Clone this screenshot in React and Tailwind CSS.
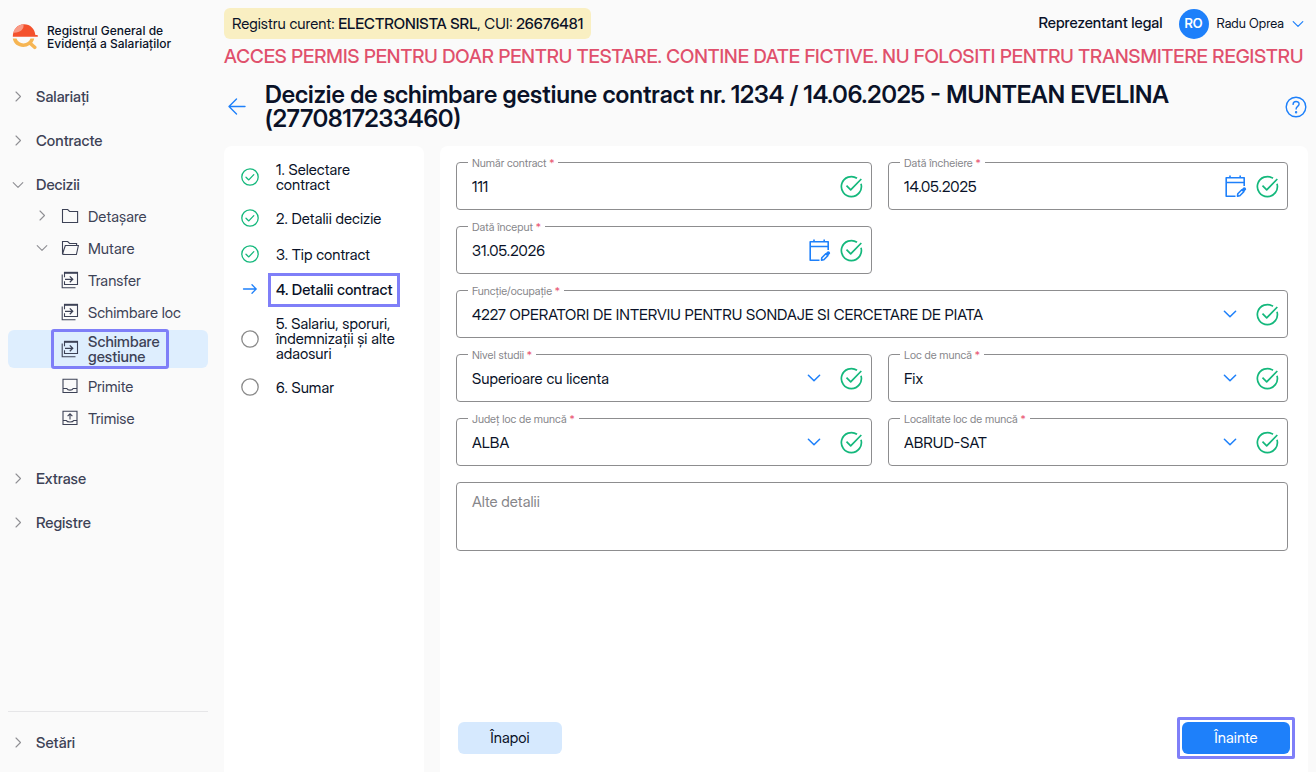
import React, { useState } from "react";

const stroke = { fill: "none", stroke: "currentColor", strokeLinecap: "round", strokeLinejoin: "round" };

function ChevronRight() {
  return (
    <svg viewBox="0 0 12 12" className="w-3 h-3 text-[#8f8f94]" {...stroke} strokeWidth="1.1">
      <path d="M4 1 8.500 5.500 4 10" />
    </svg>
  );
}

function ChevronDown({ className = "w-3 h-3 text-[#8f8f94]", width = "1.1" }) {
  return (
    <svg viewBox="0 0 12 12" className={className} {...stroke} strokeWidth={width}>
      <path d="M1.2 3.6 6 8.4l4.800-4.800" />
    </svg>
  );
}

function Logo() {
  return (
    <svg viewBox="0 0 26 26" className="w-[26px] h-[26px] shrink-0">
      <path d="M.8 12.800C.8 5.700 5.500.2 12 .2s10.800 4.800 11.400 10.900h1.800c.5 0 .6.400.6.800v.9z" fill="#f4512c" />
      <path d="M1.300 8.800C2.700 4.200 6 .9 11.300.3c1.600 4.600-3.700 9-10 8.500z" fill="#f99a86" />
      <path d="M.8 14.600h3.700c1 3 3.700 4.800 7 4.800 3.400 0 6-2 7-4.800h3.700c-.4 1.700-1 3-2 4.200l3.900 3.400c1.600 1.500-.8 4-2.400 2.600l-4.200-3.700c-1.800 1.300-3.900 1.900-6.200 1.900C6 23 1.600 19.800.8 14.600z" fill="#f6b553" />
    </svg>
  );
}

const navIcons = {
  folder: (
    <path d="M1.500 15.500v-13h5.200l1.900 2h8v11z" />
  ),
  folderOpen: (
    <path d="M3.900 15.500 1.500 15V2.500h5.200l1.900 2h7v2M1.500 15l2.800-8.500h13.100l-2 9H1.800" />
  ),
  transfer: (
    <>
      <path d="M3.500 6.300V1.500h13v12h-13v-3.200M1.200 3.500v13.200h13.300" />
      <path d="M3 1.800h14" strokeWidth="2" />
      <path d="M4 8.300h7.500M8.800 5.400l2.900 2.900-2.900 2.900" strokeWidth="1.300" />
    </>
  ),
  inbox: (
    <path d="M2 2.200h14v13.300H2zM2 11.500h3.800c1 2.200 5.400 2.200 6.400 0H16" />
  ),
  outbox: (
    <path d="M2 2.200h14v13.300H2zM2 11.500h3.300c.8 2 6.600 2 7.400 0H16M9 10.500V5M6.600 7.200 9 4.800l2.400 2.400" />
  ),
};

const subItems = [
  { label: "Detașare", icon: "folder", chevron: "right" },
  { label: "Mutare", icon: "folderOpen", chevron: "down" },
  { label: "Transfer", icon: "transfer" },
  { label: "Schimbare loc", icon: "transfer" },
  { label: "Schimbare gestiune", icon: "transfer", active: true },
  { label: "Primite", icon: "inbox" },
  { label: "Trimise", icon: "outbox" },
];

function NavItem({ label, open }) {
  return (
    <button className="w-full h-7 flex items-center pl-1 gap-3 text-[15px] font-medium text-[#3d4256] cursor-pointer">
      <span className="w-3 flex justify-center">{open ? <ChevronDown /> : <ChevronRight />}</span>
      <span>{label}</span>
    </button>
  );
}

function SubItem({ item }) {
  return (
    <a
      href="#"
      className={
        item.active
          ? "min-h-7 flex items-center rounded-md bg-[#deeefe] font-medium"
          : "min-h-7 flex items-center rounded-md"
      }
    >
      <span className="w-11 shrink-0 pl-7 flex">
        {item.chevron === "right" && <ChevronRight />}
        {item.chevron === "down" && <ChevronDown />}
      </span>
      <span
        className={
          item.active
            ? "flex items-center gap-2 px-2 py-1 rounded-xs outline-3 -outline-offset-2 outline-[#7f7ff8]"
            : "flex items-center gap-2 px-2"
        }
      >
        <span className="w-5 flex justify-center shrink-0">
          <svg viewBox="0 0 18 18" className="w-[18px] h-[18px]" {...stroke} strokeLinecap="butt" strokeLinejoin="miter" strokeWidth="1.1">
            {navIcons[item.icon]}
          </svg>
        </span>
        <span className={item.active ? "w-min leading-[15px]" : "leading-[15px]"}>{item.label}</span>
      </span>
    </a>
  );
}

function Sidebar() {
  return (
    <aside className="w-[216px] shrink-0 px-2 flex flex-col">
      <div className="flex items-center gap-[9px] pl-1 pt-6">
        <Logo />
        <p className="font-['Inter',sans-serif] text-[12px] leading-[13px] font-medium text-[#0a1228] whitespace-nowrap">
          Registrul General de
          <br />
          Evidență a Salariaților
        </p>
      </div>

      <nav className="mt-[33px] flex flex-col gap-4">
        <NavItem label="Salariați" />
        <NavItem label="Contracte" />
        <div className="pb-[17px]">
          <NavItem label="Decizii" open />
          <div className="mt-[3px] flex flex-col gap-1 text-[15px] text-[#3d4256]">
            {subItems.map((item) => (
              <SubItem key={item.label} item={item} />
            ))}
          </div>
        </div>
        <NavItem label="Extrase" />
        <NavItem label="Registre" />
      </nav>

      <div className="mt-auto border-t border-[#e6e6e8] pt-[17px] pb-[15px]">
        <NavItem label="Setări" />
      </div>
    </aside>
  );
}

const steps = [
  { label: "1. Selectare contract", state: "done" },
  { label: "2. Detalii decizie", state: "done" },
  { label: "3. Tip contract", state: "done" },
  { label: "4. Detalii contract", state: "current" },
  { label: "5. Salariu, sporuri, îndemnizații și alte adaosuri", state: "todo" },
  { label: "6. Sumar", state: "todo" },
];

function StepIcon({ state }) {
  if (state === "done") {
    return (
      <svg viewBox="0 0 20 20" className="w-5 h-5 shrink-0 text-[#14b87c]" {...stroke} strokeWidth="1.300">
        <circle cx="10" cy="10" r="8.200" />
        <path d="m6 10.300 2.800 2.600 5-5.300" />
      </svg>
    );
  }
  if (state === "current") {
    return (
      <svg viewBox="0 0 20 20" className="w-5 h-5 shrink-0 text-[#1e80fa]" {...stroke} strokeWidth="1.300">
        <path d="M3.500 9h12.500M12 4.800 16.200 9 12 13.200" />
      </svg>
    );
  }
  return (
    <svg viewBox="0 0 20 20" className="w-5 h-5 shrink-0 text-[#8a8a8a]" {...stroke} strokeWidth="1.300">
      <circle cx="10" cy="10" r="8.200" />
    </svg>
  );
}

function Steps() {
  return (
    <ol className="w-[200px] shrink-0 bg-white rounded-t-lg pl-4 pr-6 pt-4 flex flex-col gap-4 text-[15px] leading-[15px] text-[#0a1228]">
      {steps.map((step) => (
        <li key={step.label} className="flex items-center gap-4 min-h-5">
          <StepIcon state={step.state} />
          <span
            className={
              step.state === "current"
                ? "font-medium leading-[18px] whitespace-nowrap outline-3 outline-offset-5 outline-[#7f7ff8]"
                : ""
            }
          >
            {step.label}
          </span>
        </li>
      ))}
    </ol>
  );
}

function ValidIcon() {
  return (
    <svg viewBox="0 0 24 24" className="w-6 h-6 shrink-0 text-[#14b87c]" {...stroke} strokeLinecap="butt" strokeWidth="1.700">
      <path d="M22 9.800A10 10 0 1 1 18 4.300" />
      <path d="M7.500 11.700l4.200 4.200L22.300 5" />
    </svg>
  );
}

function CalendarIcon() {
  return (
    <svg viewBox="0 0 24 24" className="w-6 h-6 text-[#1e80fa]" {...stroke} strokeLinecap="butt" strokeWidth="1.600">
      <path d="M12.500 22.300H3.200V3.800h18V12M3.200 8.500h18M7 1.500v3M17.200 1.500v3" />
      <path d="m14.800 19.800 4-4 2 2-4 4-2.300.4z" />
      <path d="m18.500 15.500 1.800-1.800c1.400-1.300 3.800 1 2.400 2.400l-1.800 1.800z" fill="currentColor" stroke="none" />
    </svg>
  );
}

function Field({ id, label, value, type, wide }) {
  const [current, setCurrent] = useState(value);
  return (
    <div
      className={
        wide
          ? "relative col-span-2 h-12 flex items-center gap-2 pr-2 border border-[#8d8d8f] rounded"
          : "relative h-12 flex items-center gap-2 pr-2 border border-[#8d8d8f] rounded"
      }
    >
      <label htmlFor={id} className="absolute left-[11px] -top-2 px-1 bg-white text-[11px] leading-4 text-[#86868a]">
        {label} <span className="text-[#e8536f]">*</span>
      </label>
      {type === "select" ? (
        <>
          <select
            id={id}
            defaultValue={value}
            className="flex-1 min-w-0 h-full pl-[15px] pt-[2px] appearance-none bg-transparent outline-none text-[15px] text-[#0a1228]"
          >
            <option>{value}</option>
          </select>
          <ChevronDown className="w-[18px] h-[18px] p-[2px] mr-2 shrink-0 text-[#1e80fa] pointer-events-none" width="1.300" />
        </>
      ) : (
        <input
          id={id}
          type="text"
          value={current}
          onChange={(e) => setCurrent(e.target.value)}
          className="flex-1 min-w-0 h-full pl-[15px] bg-transparent outline-none text-[15px] text-[#0a1228]"
        />
      )}
      {type === "date" && (
        <button type="button" aria-label="Alege data" className="shrink-0 cursor-pointer">
          <CalendarIcon />
        </button>
      )}
      <ValidIcon />
    </div>
  );
}

function ContractForm() {
  return (
    <form className="flex-1 min-w-0 bg-white rounded-t-lg flex flex-col" onSubmit={(e) => e.preventDefault()}>
      <div className="pt-4 pl-4 pr-5 grid grid-cols-[26fr_25fr] gap-4">
        <Field id="numar" label="Număr contract" value="111" />
        <Field id="incheiere" label="Dată încheiere" value="14.05.2025" type="date" />
        <Field id="inceput" label="Dată început" value="31.05.2026" type="date" />
        <div></div>
        <Field
          id="functie"
          label="Funcție/ocupație"
          value="4227 OPERATORI DE INTERVIU PENTRU SONDAJE SI CERCETARE DE PIATA"
          type="select"
          wide
        />
        <Field id="studii" label="Nivel studii" value="Superioare cu licenta" type="select" />
        <Field id="loc" label="Loc de muncă" value="Fix" type="select" />
        <Field id="judet" label="Județ loc de muncă" value="ALBA" type="select" />
        <Field id="localitate" label="Localitate loc de muncă" value="ABRUD-SAT" type="select" />
        <textarea
          aria-label="Alte detalii"
          placeholder="Alte detalii"
          className="col-span-2 block h-[69px] resize-none border border-[#8d8d8f] rounded px-[15px] py-2 text-[15px] leading-[22px] outline-none placeholder:text-[#86868a]"
        />
      </div>

      <div className="mt-auto pl-[18px] pr-[13px] pb-[13px] pt-6 flex items-center justify-between text-[15px]">
        <button type="button" className="w-[104px] h-8 rounded-md bg-[#d6e9fe] text-[#0a1228] cursor-pointer">
          Înapoi
        </button>
        <div className="border-3 border-[#7f7ff8] rounded-xs p-[2px]">
          <button type="submit" className="block w-[108px] h-8 rounded-md bg-[#1e80fa] text-white cursor-pointer">
            Înainte
          </button>
        </div>
      </div>
    </form>
  );
}

function App() {
  return (
    <div className="min-h-screen flex bg-[#fafafa] font-['Inter_Display','Inter',sans-serif] text-[#0a1228]">
      <Sidebar />

      <main className="flex-1 min-w-0 px-2 pt-2 flex flex-col">
        {/* Top bar */}
        <header className="flex items-center justify-between">
          <p className="h-[31px] px-2 rounded-md bg-[#f9efc2] text-[15px] leading-[31px]">
            Registru curent: <span className="font-medium">ELECTRONISTA SRL</span>, CUI:{" "}
            <span className="font-medium">26676481</span>
          </p>
          <div className="flex items-center">
            <span className="text-[15px] font-medium">Reprezentant legal</span>
            <button className="ml-4 pr-1 flex items-center gap-2 cursor-pointer">
              <span className="w-[30px] h-[30px] rounded-full bg-[#1e80fa] text-white text-[13px] font-semibold flex items-center justify-center">
                RO
              </span>
              <span className="text-[13px]">Radu Oprea</span>
              <ChevronDown className="w-3 h-3 text-[#1e80fa]" width="1.200" />
            </button>
          </div>
        </header>

        <p className="mt-[6px] text-[19px] leading-6 font-medium text-[#e0506c]">
          ACCES PERMIS PENTRU DOAR PENTRU TESTARE. CONTINE DATE FICTIVE. NU FOLOSITI PENTRU TRANSMITERE REGISTRU
        </p>

        {/* Page title */}
        <div className="mt-[14px] flex items-center">
          <a href="#" aria-label="Înapoi la decizii" className="ml-[3px] mr-[18px] shrink-0 text-[#1e80fa]">
            <svg viewBox="0 0 20 20" className="w-5 h-5" {...stroke} strokeWidth="1.400">
              <path d="M18 9.500H2.200M9.500 2 2 9.500 9.500 17" />
            </svg>
          </a>
          <h1 className="flex-1 text-[24px] leading-6 font-semibold">
            Decizie de schimbare gestiune contract nr. 1234 / 14.06.2025 - MUNTEAN EVELINA (2770817233460)
          </h1>
          <button aria-label="Ajutor" className="ml-4 shrink-0 text-[#1e80fa] cursor-pointer">
            <svg viewBox="0 0 24 24" className="w-6 h-6" {...stroke} strokeWidth="1.400">
              <circle cx="12" cy="12" r="9.800" />
              <path d="M9.100 9.400c0-3.900 6-3.700 6-.3 0 2.300-3 2.300-3 4.900" />
              <circle cx="12.100" cy="17.300" r=".5" fill="currentColor" />
            </svg>
          </button>
        </div>

        <div className="mt-[15px] flex-1 flex gap-4">
          <Steps />
          <ContractForm />
        </div>
      </main>
    </div>
  );
}

export default App;
